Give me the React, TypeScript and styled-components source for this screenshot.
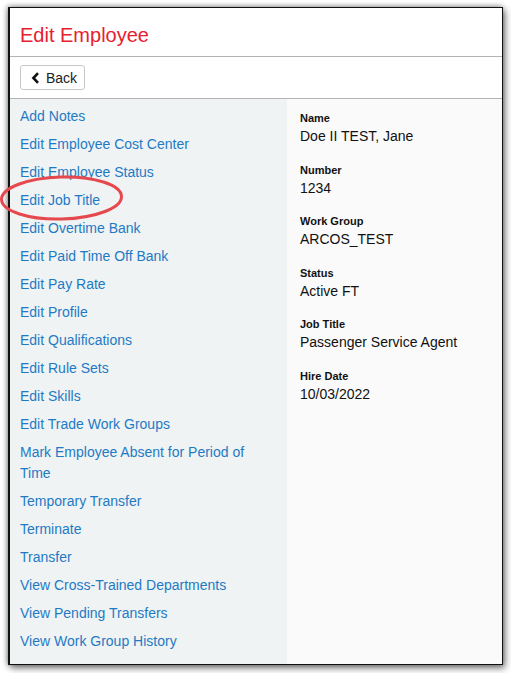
import React from "react";
import styled, { createGlobalStyle } from "styled-components";

const Global = createGlobalStyle`
  html, body { margin: 0; padding: 0; background: #ffffff; }
  body { font-family: Arial, "Liberation Sans", sans-serif; }
  * { box-sizing: border-box; }
`;

const Stage = styled.div`
  position: relative;
  width: 511px;
  height: 673px;
  padding: 7px 0 0 8px;
`;

const Window = styled.div`
  width: 495px;
  height: 658px;
  border: 1px solid #111;
  border-left-width: 2px;
  background: #fff;
  box-shadow: 2px 3px 7px rgba(0, 0, 0, 0.55), -1px -1px 5px rgba(0, 0, 0, 0.35);
  display: flex;
  flex-direction: column;
  overflow: hidden;
`;

const Header = styled.div`
  height: 49px;
  padding: 15px 0 0 10px;
  border-bottom: 1px solid #b3b3b3;
`;

const Title = styled.h1`
  margin: 0;
  font-weight: normal;
  font-size: 20px;
  line-height: 24px;
  color: #e8202e;
`;

const Toolbar = styled.div`
  height: 42px;
  padding: 8px 0 0 10px;
  border-bottom: 1px solid #b3b3b3;
`;

const BackButton = styled.button`
  display: inline-flex;
  align-items: center;
  gap: 6px;
  height: 25px;
  width: 65px;
  padding: 0 0 0 10px;
  border: 1px solid #c7c7c7;
  border-radius: 3px;
  background: #fff;
  font-family: Arial, "Liberation Sans", sans-serif;
  font-size: 14px;
  color: #222;
  cursor: pointer;
`;

const Body = styled.div`
  flex: 1;
  display: grid;
  grid-template-columns: 277px 1fr;
`;

const LeftCol = styled.nav`
  background: #eff3f4;
  padding: 3px 11px 0 10px;
  display: flex;
  flex-direction: column;
`;

const NavLink = styled.a`
  display: block;
  padding: 3.5px 0;
  font-size: 14px;
  line-height: 21px;
  color: #1f7ac4;
  text-decoration: none;
  cursor: pointer;
`;

const RightCol = styled.div`
  background: #fafafa;
  padding: 11px 14px 0 13px;
  display: flex;
  flex-direction: column;
  gap: 14.6px;
`;

const Field = styled.div`
  display: flex;
  flex-direction: column;
`;

const Label = styled.div`
  font-size: 11px;
  font-weight: bold;
  line-height: 16px;
  color: #111;
`;

const Value = styled.div`
  font-size: 14px;
  line-height: 21px;
  color: #111;
`;

const Annotation = styled.svg`
  position: absolute;
  left: 0;
  top: 170px;
  width: 130px;
  height: 60px;
  pointer-events: none;
`;

const links = [
  "Add Notes",
  "Edit Employee Cost Center",
  "Edit Employee Status",
  "Edit Job Title",
  "Edit Overtime Bank",
  "Edit Paid Time Off Bank",
  "Edit Pay Rate",
  "Edit Profile",
  "Edit Qualifications",
  "Edit Rule Sets",
  "Edit Skills",
  "Edit Trade Work Groups",
  "Mark Employee Absent for Period of Time",
  "Temporary Transfer",
  "Terminate",
  "Transfer",
  "View Cross-Trained Departments",
  "View Pending Transfers",
  "View Work Group History",
];

const fields: [string, string][] = [
  ["Name", "Doe II TEST, Jane"],
  ["Number", "1234"],
  ["Work Group", "ARCOS_TEST"],
  ["Status", "Active FT"],
  ["Job Title", "Passenger Service Agent"],
  ["Hire Date", "10/03/2022"],
];

export default function App() {
  return (
    <>
      <Global />
      <Stage>
        <Window>
          <Header>
            <Title>Edit Employee</Title>
          </Header>
          <Toolbar>
            <BackButton>
              <svg width="9" height="12" viewBox="0 0 9 12">
                <path d="M7 1.2 L2.4 6 L7 10.8" fill="none" stroke="#111" strokeWidth="2.6" />
              </svg>
              Back
            </BackButton>
          </Toolbar>
          <Body>
            <LeftCol>
              {links.map((l) => (
                <NavLink key={l}>{l}</NavLink>
              ))}
            </LeftCol>
            <RightCol>
              {fields.map(([k, v]) => (
                <Field key={k}>
                  <Label>{k}</Label>
                  <Value>{v}</Value>
                </Field>
              ))}
            </RightCol>
          </Body>
        </Window>
        <Annotation viewBox="0 0 130 60">
          <ellipse
            cx="61.5"
            cy="28"
            rx="60"
            ry="21"
            transform="rotate(-1.5 61.5 28)"
            fill="none"
            stroke="#e5484d"
            strokeWidth="3"
          />
        </Annotation>
      </Stage>
    </>
  );
}
